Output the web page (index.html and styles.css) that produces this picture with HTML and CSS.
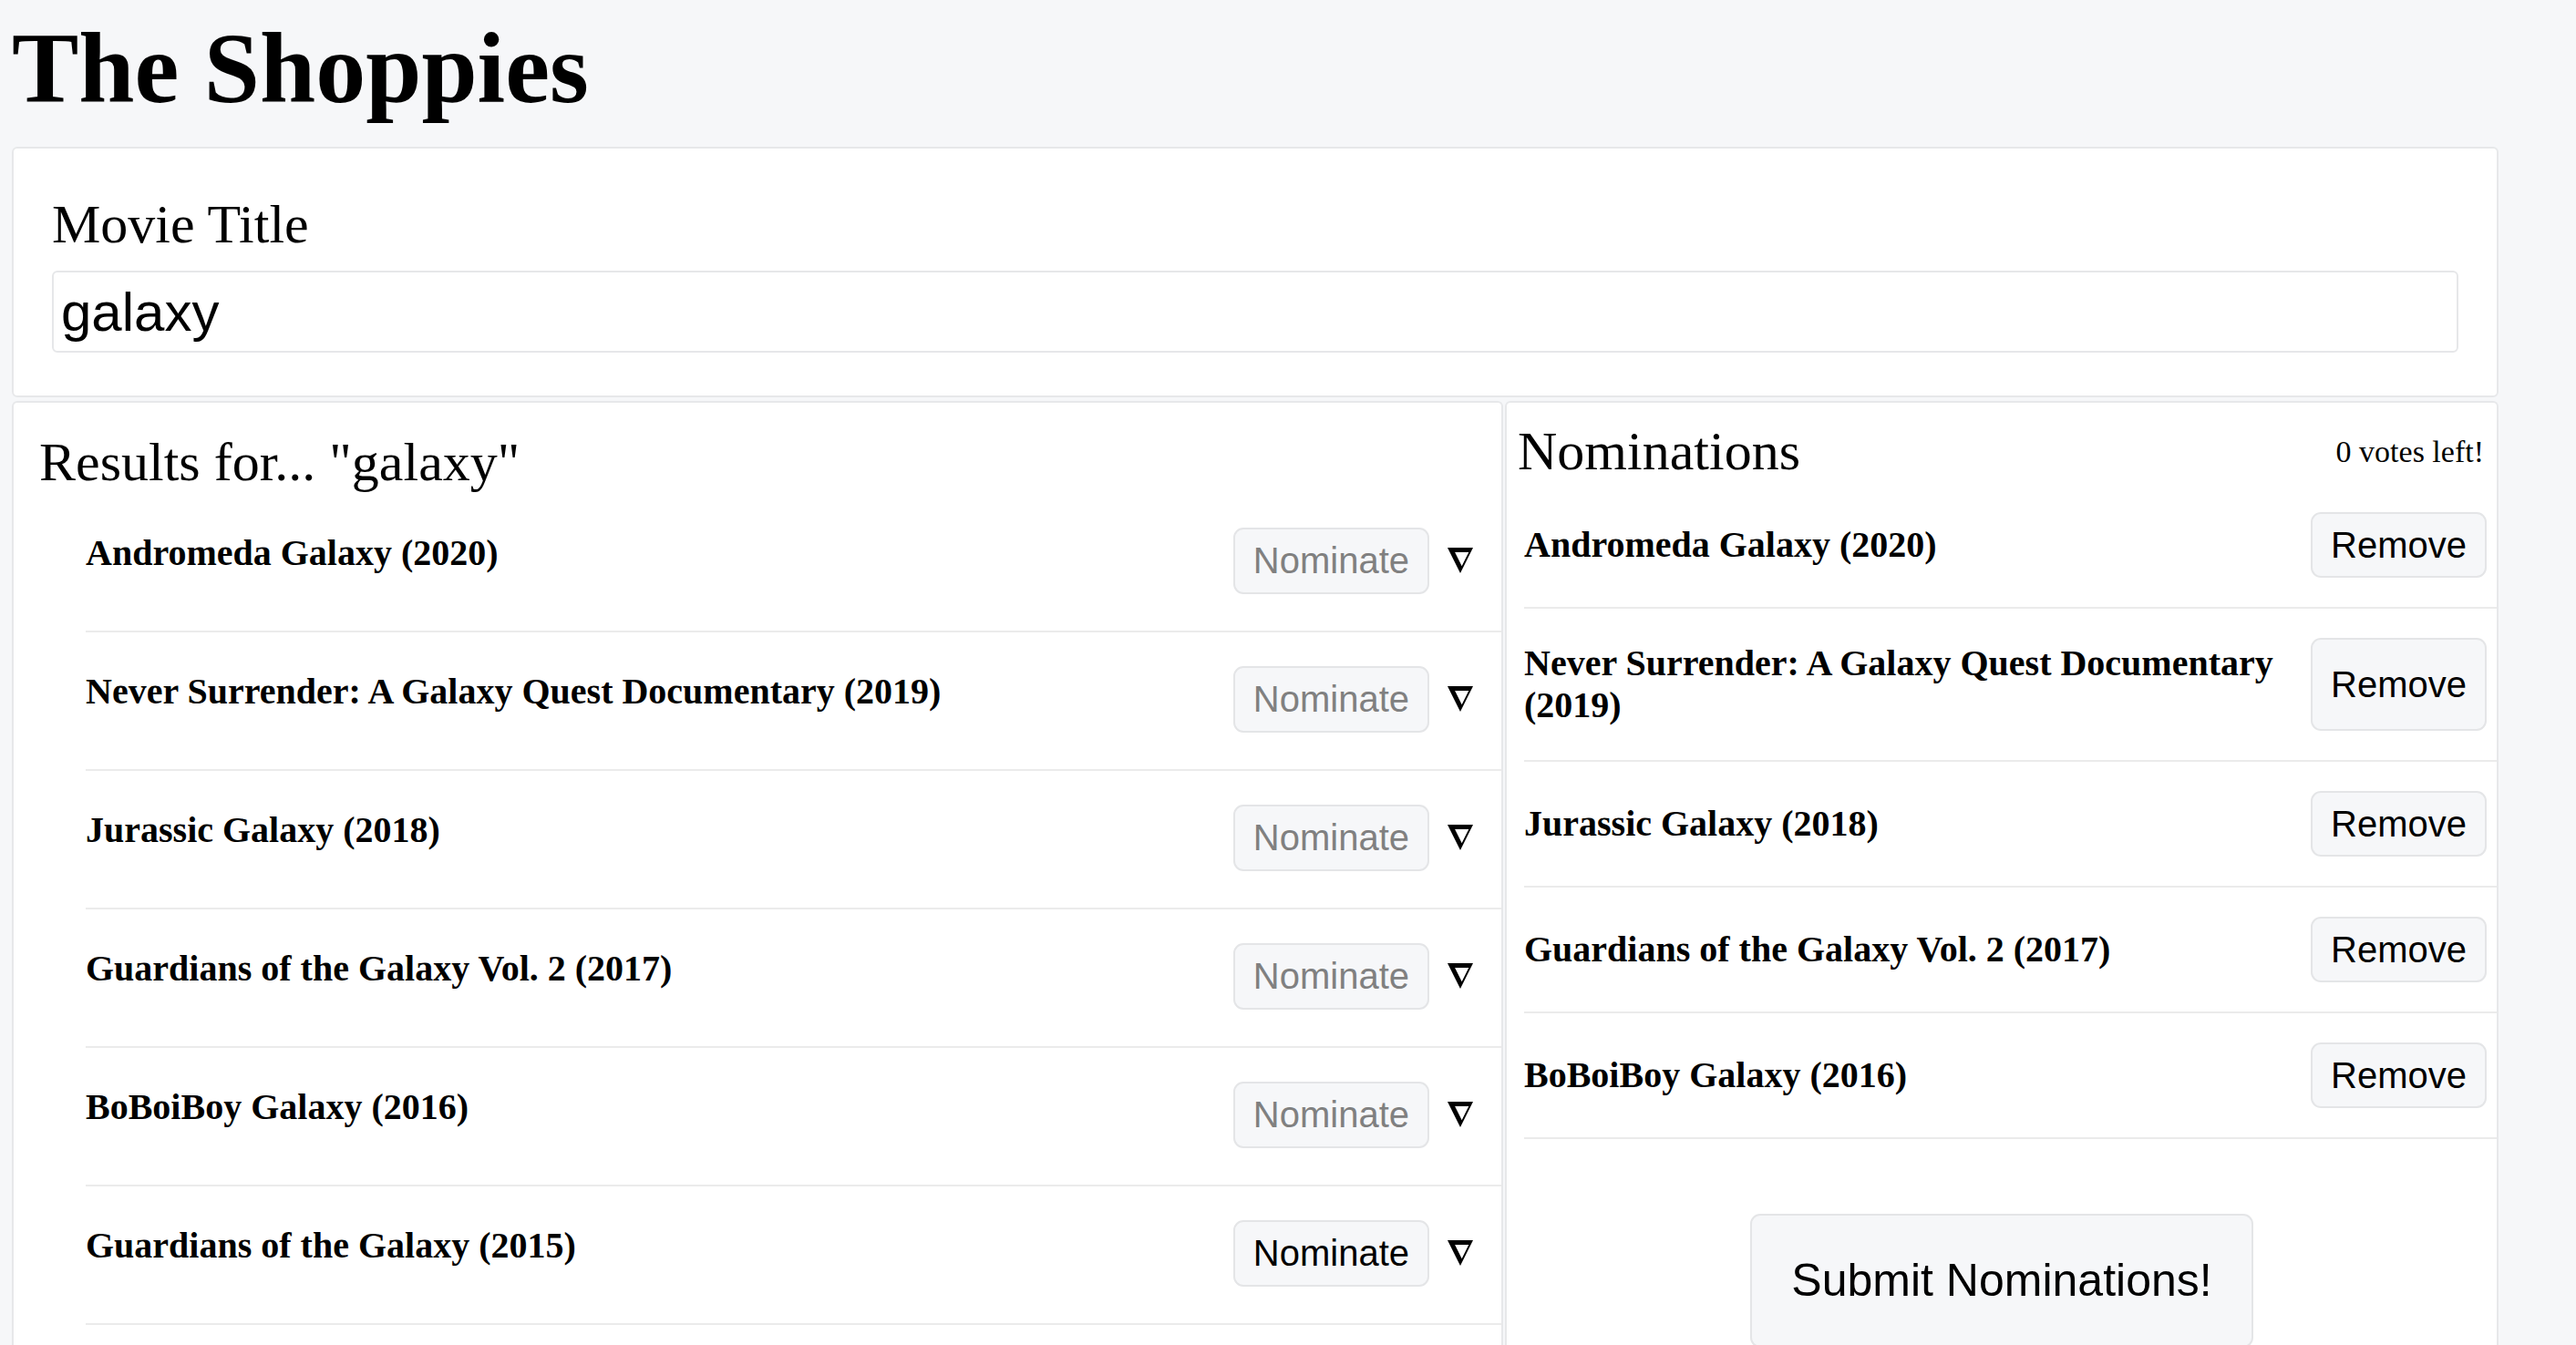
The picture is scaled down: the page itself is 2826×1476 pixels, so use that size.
FILE: index.html
```html
<!DOCTYPE html>
<html lang="en">
<head>
<meta charset="utf-8">
<title>The Shoppies</title>
<link rel="stylesheet" href="styles.css">
</head>
<body>
<div class="page">
  <h1 class="site-title">The Shoppies</h1>

  <section class="card search">
    <label class="search-label" for="q">Movie Title</label>
    <input id="q" class="search-input" type="text" value="galaxy">
  </section>

  <div class="panels">
    <section class="card results">
      <h2 class="panel-title">Results for... "galaxy"</h2>
      <ul class="result-list">
        <li class="result-row">
          <h4 class="movie">Andromeda Galaxy (2020)</h4>
          <div class="actions">
            <button class="btn" disabled>Nominate</button>
            <svg class="toggle" viewBox="0 0 28 28" width="28" height="28"><path fill-rule="evenodd" d="M0 0H28L14 28Z M8.1 5L23.26 5L15.68 20.16Z"/></svg>
          </div>
        </li>
        <li class="result-row">
          <h4 class="movie">Never Surrender: A Galaxy Quest Documentary (2019)</h4>
          <div class="actions">
            <button class="btn" disabled>Nominate</button>
            <svg class="toggle" viewBox="0 0 28 28" width="28" height="28"><path fill-rule="evenodd" d="M0 0H28L14 28Z M8.1 5L23.26 5L15.68 20.16Z"/></svg>
          </div>
        </li>
        <li class="result-row">
          <h4 class="movie">Jurassic Galaxy (2018)</h4>
          <div class="actions">
            <button class="btn" disabled>Nominate</button>
            <svg class="toggle" viewBox="0 0 28 28" width="28" height="28"><path fill-rule="evenodd" d="M0 0H28L14 28Z M8.1 5L23.26 5L15.68 20.16Z"/></svg>
          </div>
        </li>
        <li class="result-row">
          <h4 class="movie">Guardians of the Galaxy Vol. 2 (2017)</h4>
          <div class="actions">
            <button class="btn" disabled>Nominate</button>
            <svg class="toggle" viewBox="0 0 28 28" width="28" height="28"><path fill-rule="evenodd" d="M0 0H28L14 28Z M8.1 5L23.26 5L15.68 20.16Z"/></svg>
          </div>
        </li>
        <li class="result-row">
          <h4 class="movie">BoBoiBoy Galaxy (2016)</h4>
          <div class="actions">
            <button class="btn" disabled>Nominate</button>
            <svg class="toggle" viewBox="0 0 28 28" width="28" height="28"><path fill-rule="evenodd" d="M0 0H28L14 28Z M8.1 5L23.26 5L15.68 20.16Z"/></svg>
          </div>
        </li>
        <li class="result-row">
          <h4 class="movie">Guardians of the Galaxy (2015)</h4>
          <div class="actions">
            <button class="btn">Nominate</button>
            <svg class="toggle" viewBox="0 0 28 28" width="28" height="28"><path fill-rule="evenodd" d="M0 0H28L14 28Z M8.1 5L23.26 5L15.68 20.16Z"/></svg>
          </div>
        </li>
      </ul>
    </section>

    <section class="card noms">
      <div class="noms-head">
        <h2 class="panel-title">Nominations</h2>
        <small class="votes">0 votes left!</small>
      </div>
      <ul class="nom-list">
        <li class="nom-row">
          <h4 class="movie nom-movie">Andromeda Galaxy (2020)</h4>
          <button class="btn remove">Remove</button>
        </li>
        <li class="nom-row">
          <h4 class="movie nom-movie">Never Surrender: A Galaxy Quest Documentary (2019)</h4>
          <button class="btn remove">Remove</button>
        </li>
        <li class="nom-row">
          <h4 class="movie nom-movie">Jurassic Galaxy (2018)</h4>
          <button class="btn remove">Remove</button>
        </li>
        <li class="nom-row">
          <h4 class="movie nom-movie">Guardians of the Galaxy Vol. 2 (2017)</h4>
          <button class="btn remove">Remove</button>
        </li>
        <li class="nom-row">
          <h4 class="movie nom-movie">BoBoiBoy Galaxy (2016)</h4>
          <button class="btn remove">Remove</button>
        </li>
      </ul>
      <div class="submit-wrap">
        <button class="btn submit">Submit Nominations!</button>
      </div>
    </section>
  </div>
</div>
</body>
</html>
```

FILE: styles.css
```css
html, body {
  margin: 0;
  padding: 0;
  background: #f6f7f9;
}

::-webkit-scrollbar {
  display: none;
}

body {
  font-family: "Liberation Serif", "Times New Roman", serif;
  color: #000;
}

.page {
  width: 2728px;
  padding: 0 0 0 13px;
}

.site-title {
  margin: 0;
  padding-top: 12px;
  font-size: 110px;
  line-height: 126px;
  font-weight: bold;
}

.card {
  background: #fff;
  border: 2px solid #e7e8ea;
  border-radius: 6px;
  box-sizing: border-box;
}

.search {
  margin-top: 23px;
  padding: 49px 42px 47px 42px;
}

.search-label {
  display: block;
  font-size: 60px;
  line-height: 69px;
  margin-bottom: 16px;
}

.search-input {
  display: block;
  width: 100%;
  box-sizing: border-box;
  height: 90px;
  padding: 0 8px;
  border: 2px solid #e6e7e9;
  border-radius: 6px;
  font-family: "Liberation Sans", Arial, sans-serif;
  font-size: 60px;
  color: #000;
  background: #fff;
  outline: none;
}

.panels {
  display: grid;
  grid-template-columns: 1636px 1090px;
  column-gap: 2px;
  margin-top: 4px;
  align-items: start;
}

.results {
  padding: 31px 0 60px 28px;
}

.panel-title {
  margin: 0;
  font-size: 60px;
  line-height: 69px;
  font-weight: normal;
}

.result-list {
  list-style: none;
  margin: 0 0 0 51px;
  padding: 0;
}

.result-row {
  display: flex;
  align-items: center;
  height: 150px;
  padding-right: 31px;
  border-bottom: 2px solid #ebebeb;
}

.movie {
  margin: 0;
  font-size: 40px;
  line-height: 46px;
  font-weight: bold;
}

.result-row .movie {
  flex: 1;
  margin-bottom: 20px;
}

.actions {
  display: flex;
  align-items: center;
  gap: 20px;
  margin-bottom: 4px;
}

.toggle {
  display: block;
  fill: #000;
}

.btn {
  font-family: "Liberation Sans", Arial, sans-serif;
  font-size: 40px;
  line-height: 47px;
  padding: 11px 20px;
  border: 2px solid #e4e5e7;
  border-radius: 11px;
  background: #f6f7f9;
  color: #000;
  cursor: pointer;
}

.btn:disabled {
  color: #808080;
  cursor: default;
}

.noms {
  padding: 19px 0 0 0;
}

.noms-head {
  display: flex;
  justify-content: space-between;
  align-items: center;
  padding: 0 14px 0 12px;
}

.votes {
  font-size: 34px;
  line-height: 39px;
}

.nom-list {
  list-style: none;
  margin: 0 0 0 19px;
  padding: 0;
}

.nom-row {
  display: flex;
  align-items: center;
  gap: 20px;
  padding: 32px 11px 32px 0;
  border-bottom: 2px solid #ebebeb;
}

.nom-movie {
  flex: 1;
  margin: 5px 0;
}

.remove {
  align-self: stretch;
  line-height: 46px;
}

.submit-wrap {
  display: flex;
  justify-content: center;
  margin-top: 82px;
  padding-bottom: 60px;
}

.submit {
  font-size: 50px;
  line-height: 57px;
  padding: 43px 43px;
}
```
